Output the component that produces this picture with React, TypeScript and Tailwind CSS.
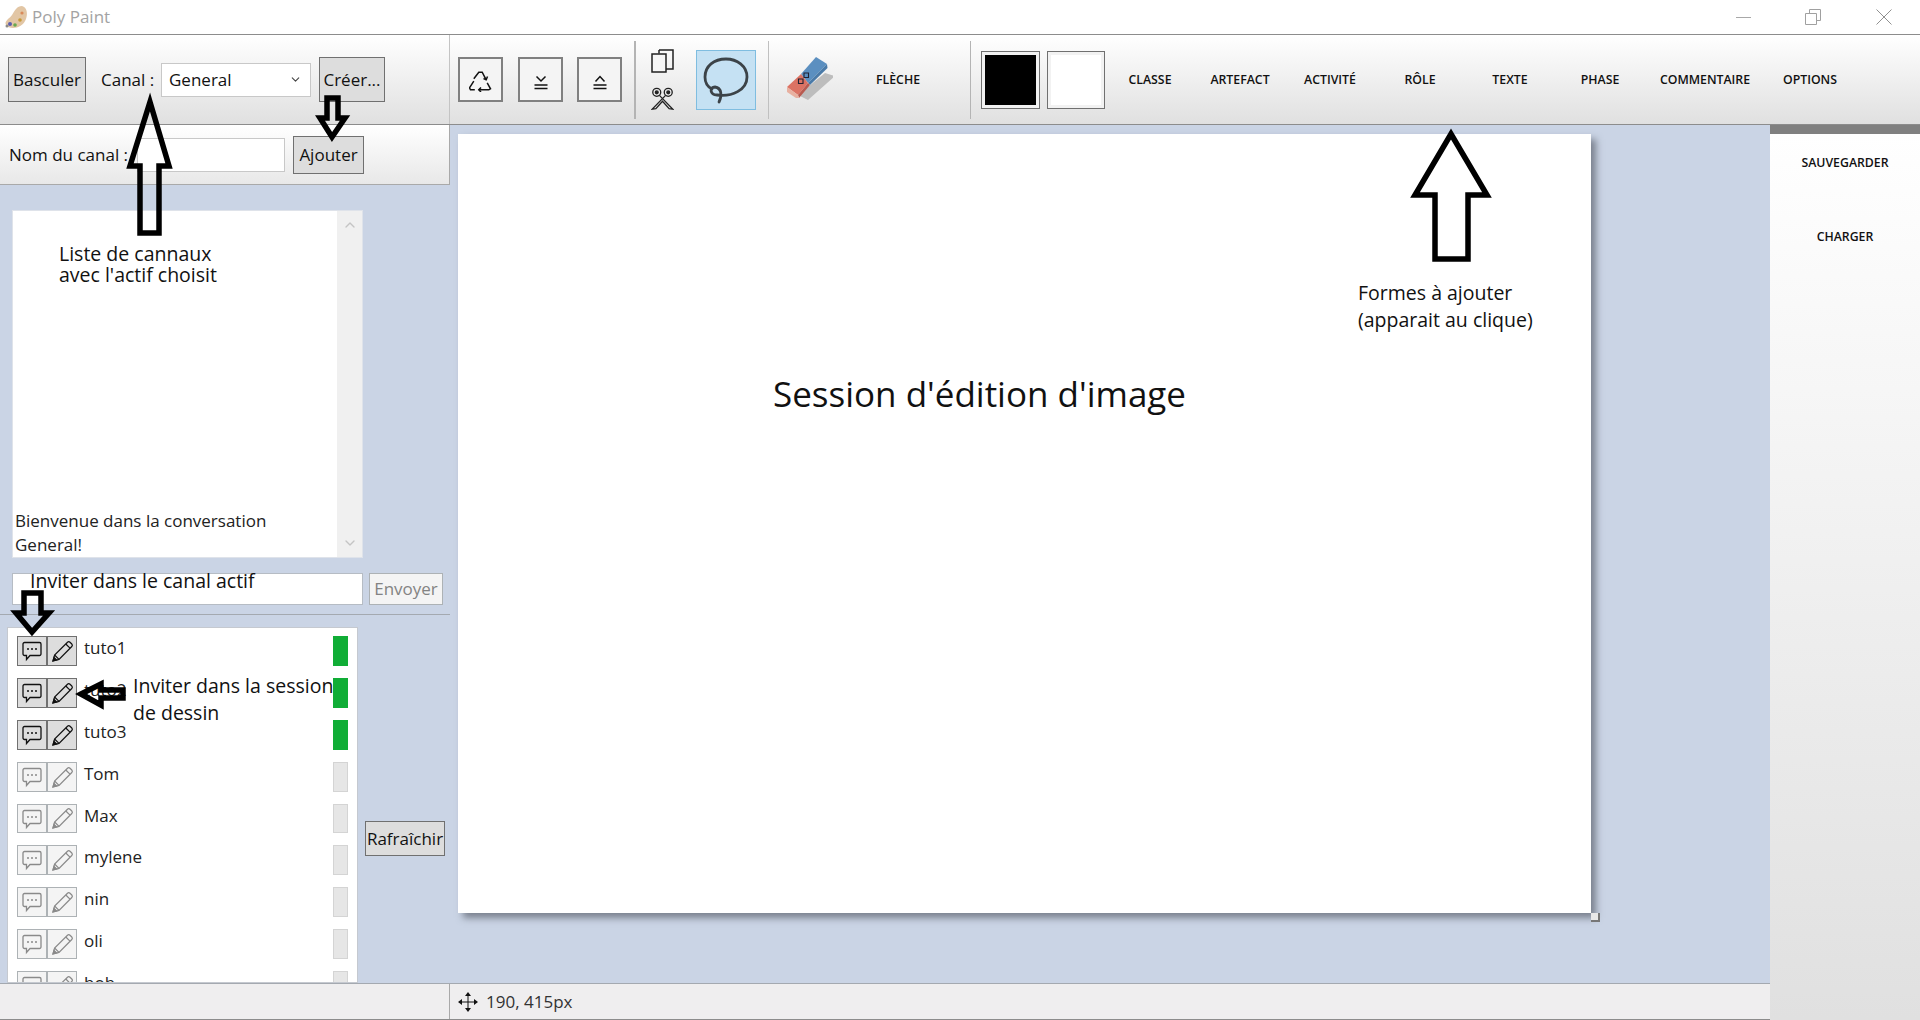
import { ChevronDown, ChevronUp } from "lucide-react";

const users = [
    { name: "tuto1", online: true },
    { name: "tuto2", online: true },
    { name: "tuto3", online: true },
    { name: "Tom", online: false },
    { name: "Max", online: false },
    { name: "mylene", online: false },
    { name: "nin", online: false },
    { name: "oli", online: false },
    { name: "bob", online: false },
];

const shapes = [
    { label: "CLASSE", wide: false },
    { label: "ARTEFACT", wide: false },
    { label: "ACTIVITÉ", wide: false },
    { label: "RÔLE", wide: false },
    { label: "TEXTE", wide: false },
    { label: "PHASE", wide: false },
    { label: "COMMENTAIRE", wide: true },
    { label: "OPTIONS", wide: false },
];

const ChatIcon = () => (
    <svg width="22" height="22" viewBox="0 0 22 22" fill="none" stroke="currentColor" strokeWidth="1.3">
        <path d="M3.5 2.500h15a1.500 1.500 0 0 1 1.500 1.500v10a1.500 1.500 0 0 1-1.500 1.500H9l-3.500 4v-4h-2A1.500 1.500 0 0 1 2 14V4a1.500 1.500 0 0 1 1.500-1.500z" />
        <circle cx="7" cy="9" r="1" fill="currentColor" stroke="none" />
        <circle cx="11" cy="9" r="1" fill="currentColor" stroke="none" />
        <circle cx="15" cy="9" r="1" fill="currentColor" stroke="none" />
    </svg>
);

const PencilIcon = () => (
    <svg width="23" height="23" viewBox="0 0 23 23" fill="none" stroke="currentColor" strokeWidth="1.2">
        <path d="M2 21l1.600-6L16.500 2.200a1.800 1.800 0 0 1 2.500 0l1.800 1.800a1.800 1.800 0 0 1 0 2.500L8 19.400z" />
        <path d="M14.800 4l4.200 4.200M3.600 15L8 19.400" />
        <path d="M2 21l1-3.600 2.600 2.600z" fill="currentColor" />
    </svg>
);

const RecycleIcon = () => (
    <svg width="24" height="24" viewBox="0 0 24 24" fill="none" stroke="#111" strokeWidth="1.500">
        <path d="M4.800 10.800L9.800 4.200h3.400l4 7.600" />
        <path d="M14.500 10.500l2.700 1.300 1.300-3.300" />
        <path d="M18.200 14.800l3.300 6-1.700 1H9.800" />
        <path d="M12 19.500L9.800 21.800 12 24" />
        <path d="M5.800 21.800H1.500l-1-2 4.300-6.600" />
    </svg>
);

const EqualVee = ({ up }: { up: boolean }) => (
    <svg width="20" height="20" viewBox="0 0 20 20" fill="none" stroke="#111" strokeWidth="1.500">
        <path d={up ? "M5.500 11.500L10 6.500l4.500 5" : "M5.500 6.500L10 11l4.500-4.500"} />
        <path d="M3.500 15h13M3.500 18.500h13" />
    </svg>
);

const CopyIcon = () => (
    <svg width="23" height="24" viewBox="0 0 23 24" fill="#f6f6f6" stroke="#222" strokeWidth="1.500">
        <path d="M8 1h14v19h-7" fill="none" />
        <path d="M8 4.500V1" fill="none" />
        <path d="M1 5h14v18H1z" />
    </svg>
);

const ScissorsIcon = () => (
    <svg width="23" height="23" viewBox="0 0 25 26" fill="none" stroke="#222" strokeWidth="1.500">
        <circle cx="6" cy="6" r="4.500" />
        <circle cx="19" cy="6" r="4.500" />
        <circle cx="6" cy="6" r="1.600" fill="#222" />
        <circle cx="19" cy="6" r="1.600" fill="#222" />
        <path d="M9 9.500L24 25l-4-.5-8-9M16 9.500L1 25l4-.5 8-9" />
    </svg>
);

const LassoIcon = () => (
    <svg className="blur-[0.4px]" width="56" height="56" viewBox="0 0 56 56" fill="none" stroke="#3c4348" strokeWidth="2.800" strokeLinecap="round">
        <path d="M21 50C24 44 24 36 17 35C11 35 12 43 19 43C34 45 49 38 49 25C49 14 39 7 28 7C16 7 7 14 7 25C7 31 10 35 14 37" />
    </svg>
);

const EraserIcon = () => (
    <svg width="47" height="47" viewBox="6 6 47 47">
        <path d="M45 23L55 26L28 50L18 45z" fill="#bdbdbd" />
        <path d="M36 7L47 14L28 33L21 24z" fill="#5b8fc0" />
        <path d="M21 24L28 33L18 45L7 37z" fill="#dc7263" />
        <path d="M47 14L47.500 18L30 35L28 33z" fill="#4a7aa8" />
        <path d="M28 33L30 35L19 48L18 45z" fill="#b95a50" />
        <path d="M7 37L18 45L19 48L16 48L7 42z" fill="#e8b0a0" />
        <path d="M24 23h4.500v4.500H24zM18.500 29H23v4.500h-4.500z" fill="none" stroke="#223" strokeWidth="1.100" />
    </svg>
);

const PaletteIcon = () => (
    <svg width="24" height="26" viewBox="0 0 24 26">
        <path d="M2 21c-2-4 3-6 6-10 3-5 5-9 10-9 5 1 6 8 4 13-2 6-8 9-13 9-3 0-6-1-7-3z" fill="#e2c6a5" />
        <circle cx="6" cy="20" r="2" fill="#5a5fb0" />
        <circle cx="11" cy="21" r="1.800" fill="#6aa84f" />
        <circle cx="16" cy="16" r="1.800" fill="#c79a3a" />
        <circle cx="18" cy="9" r="1.600" fill="#d98a5a" />
        <circle cx="3" cy="22" r="1.500" fill="#8a8a8a" />
    </svg>
);

const MoveIcon = () => (
    <svg width="20" height="20" viewBox="0 0 20 20" fill="#111" stroke="none">
        <path d="M10 0l3 4H7zM10 20l-3-4h6zM0 10l4-3v6zM20 10l-4 3V7z" />
        <path d="M9.500 3h1v14h-1zM3 9.500h14v1H3z" />
    </svg>
);

const GrayButton = ({ children, className }: { children: React.ReactNode; className: string }) => (
    <div className={`flex items-center justify-center bg-[#dddddd] border border-[#707070] ${className}`}>
        {children}
    </div>
);

// annotation arrows drawn on top of the screen capture
const Arrows = () => (
    <svg className="absolute left-0 top-0 pointer-events-none" width="1920" height="1020" fill="none" stroke="#000" strokeWidth="5.500" strokeLinejoin="miter">
        <path d="M150 102L169 166H159V233H140V166H130z" />
        <path d="M327 98H338V118H345L332 137L320 118H327z" />
        <path d="M1451 134L1487 195H1468V259H1435V195H1415z" />
        <path d="M24 593H41V613H49L32 632L16 613H24z" />
        <path d="M81 694L101 684V690H123V698H101V705z" />
    </svg>
);

const App = () => {
    return (
        <div className="relative flex flex-col w-[1920px] h-[1020px] overflow-hidden bg-white text-[17px] text-[#111] font-['Open_Sans',sans-serif]">
            {/* title bar */}
            <div className="flex items-center h-[35px] shrink-0 bg-white border-b border-[#8c8c8c]">
                <div className="ml-[4px] w-[24px] flex"><PaletteIcon /></div>
                <div className="ml-[4px] text-[#a3a3a3] text-[17px]">Poly Paint</div>
                <div className="ml-auto flex items-center text-[#9a9a9a]">
                    <div className="w-[15px] h-px bg-[#a8a8a8]" />
                    <svg className="ml-[54px]" width="16" height="16" viewBox="0 0 16 16" fill="none" stroke="#a0a0a0">
                        <path d="M.5 4.500h11v11H.5zM4.500 4V.5h11v11H12" />
                    </svg>
                    <svg className="ml-[55px] mr-[28px]" width="16" height="16" viewBox="0 0 16 16" fill="none" stroke="#909090">
                        <path d="M.5.5l15 15M15.500.5l-15 15" />
                    </svg>
                </div>
            </div>

            {/* toolbar */}
            <div className="flex items-center h-[90px] shrink-0 border-b border-[#8c8c8c] bg-gradient-to-b from-white to-[#e0e0e0]">
                <div className="flex items-center w-[450px] h-full border-r border-[#c4c4c4] pl-2">
                    <GrayButton className="w-[78px] h-[45px]">Basculer</GrayButton>
                    <div className="ml-[15px] w-[60px] whitespace-nowrap">Canal :</div>
                    <div className="flex items-center justify-between w-[150px] h-[34px] bg-white border border-[#c8c8c8] pl-[7px] pr-[8px]">
                        General
                        <ChevronDown size={13} color="#444" />
                    </div>
                    <GrayButton className="ml-2 w-[66px] h-[45px]">Créer...</GrayButton>
                </div>
                <div className="ml-2 w-[45px] h-[45px] flex items-center justify-center bg-[#f4f4f4] border-2 border-[#808080]"><RecycleIcon /></div>
                <div className="ml-[15px] w-[45px] h-[45px] flex items-center justify-center bg-[#f4f4f4] border-2 border-[#808080]"><EqualVee up={false} /></div>
                <div className="ml-[14px] w-[45px] h-[45px] flex items-center justify-center bg-[#f4f4f4] border-2 border-[#808080]"><EqualVee up={true} /></div>
                <div className="ml-3 w-[2px] h-[78px] bg-[#b4b4b4]" />
                <div className="ml-[15px] flex flex-col gap-[14px] w-[25px]">
                    <CopyIcon />
                    <ScissorsIcon />
                </div>
                <div className="ml-5 w-[60px] h-[60px] flex items-center justify-center bg-[#c5e1f3] border border-[#7fbde0]"><LassoIcon /></div>
                <div className="ml-3 w-px h-[78px] bg-[#c0c0c0]" />
                <div className="ml-[17px] w-[47px] flex"><EraserIcon /></div>
                <div className="ml-5 w-[90px] pt-px text-center text-[12.3px] font-semibold">FLÈCHE</div>
                <div className="ml-[27px] w-px h-[78px] bg-[#b4b4b4]" />
                <div className="ml-[10px] w-[59px] h-[58px] p-[3px] bg-[#f2f2f2] border border-[#707070]">
                    <div className="w-full h-full bg-black" />
                </div>
                <div className="ml-[7px] w-[58px] h-[58px] p-[3px] bg-[#f2f2f2] border border-[#707070]">
                    <div className="w-full h-full bg-white" />
                </div>
                {shapes.map((s) => (
                    <div key={s.label} className={`pt-px text-center text-[12.3px] font-semibold whitespace-nowrap ${s.wide ? "w-[120px]" : "w-[90px]"}`}>
                        {s.label}
                    </div>
                ))}
            </div>

            {/* body */}
            <div className="flex flex-1 min-h-0 bg-[#cad4e5]">
                <div className="flex flex-col flex-1 min-w-0">
                    <div className="flex flex-1 min-h-0">
                        {/* left panel */}
                        <div className="flex flex-col w-[450px] shrink-0 overflow-hidden">
                            <div className="flex items-center h-[60px] shrink-0 pl-[9px] border-r border-b border-[#a9a9a9] bg-gradient-to-b from-white to-[#e8e8e8]">
                                <div className="w-[128px] whitespace-nowrap">Nom du canal :</div>
                                <div className="w-[148px] h-[34px] bg-white border border-[#c8c8c8]" />
                                <GrayButton className="ml-2 w-[71px] h-[38px]">Ajouter</GrayButton>
                            </div>

                            <div className="flex ml-3 mt-[25px] w-[351px] h-[348px] shrink-0 bg-white border border-[#dfe3ea]">
                                <div className="flex-1 flex flex-col justify-end pl-[2px] leading-[24px] text-[#222]">
                                    <div>Bienvenue dans la conversation</div>
                                    <div>General!</div>
                                </div>
                                <div className="flex flex-col justify-between items-center w-[25px] py-[6px] bg-[#f0f0f0] text-[#c4c4c4]">
                                    <ChevronUp size={16} />
                                    <ChevronDown size={16} />
                                </div>
                            </div>

                            <div className="flex ml-3 mt-[15px] h-[32px] shrink-0">
                                <div className="w-[351px] bg-white border border-[#b6bcc4]" />
                                <div className="flex items-center justify-center ml-[6px] w-[74px] bg-[#f4f4f4] border border-[#adb2b5] text-[#838383]">Envoyer</div>
                            </div>
                            <div className="mt-[9px] h-px shrink-0 bg-[#a4a9b0]" />

                            <div className="flex flex-1 min-h-0 mt-3">
                                <div className="ml-[7px] w-[351px] flex flex-col gap-3 pt-2 pl-[9px] pr-[9px] bg-white border border-[#c5c9d0] overflow-hidden">
                                    {users.map((u) => (
                                        <div key={u.name} className={`flex items-center shrink-0 ${u.name === "Max" ? "h-[29px]" : "h-[30px]"}`}>
                                            <div className={`flex items-center justify-center w-[30px] h-full border ${u.online ? "bg-[#dddddd] border-[#707070] text-[#111]" : "bg-[#f4f4f4] border-[#adb2b5] text-[#8a8a8a]"}`}>
                                                <ChatIcon />
                                            </div>
                                            <div className={`flex items-center justify-center w-[30px] h-full border ${u.online ? "bg-[#dddddd] border-[#707070] text-[#111]" : "bg-[#f4f4f4] border-[#adb2b5] text-[#8a8a8a]"}`}>
                                                <PencilIcon />
                                            </div>
                                            <div className="ml-[7px] flex-1 -mt-[6px] text-[#222]">{u.name}</div>
                                            <div className={`w-[15px] h-full border ${u.online ? "bg-[#10ad36] border-[#10ad36]" : "bg-[#e6e6e6] border-[#d4d4d4]"}`} />
                                        </div>
                                    ))}
                                </div>
                                <GrayButton className="ml-[7px] mt-[194px] w-[80px] h-[35px]">Rafraîchir</GrayButton>
                            </div>
                        </div>

                        {/* canvas */}
                        <div className="flex-1 pl-2 pt-[9px]">
                            <div className="relative w-[1133px] h-[779px] bg-white shadow-[5px_5px_7px_rgba(70,75,85,0.6)]">
                                <div className="pt-[237px] pl-[315px] text-[35px] leading-[46px] text-[#111]">Session d'édition d'image</div>
                                <div className="absolute left-[1133px] top-[779px] w-[9px] h-[9px] bg-[#e8e8e8] border-r-2 border-b-2 border-[#777]" />
                            </div>
                        </div>
                    </div>

                    {/* status bar */}
                    <div className="flex items-center h-[37px] shrink-0 bg-[#efeeef] border-t border-[#a4a9b0] border-b border-b-[#8c8c8c]">
                        <div className="w-[450px] h-full border-r border-[#a9a9a9]" />
                        <div className="ml-2 flex"><MoveIcon /></div>
                        <div className="ml-2 text-[#333]">190, 415px</div>
                    </div>
                </div>

                {/* right panel */}
                <div className="flex flex-col items-center w-[150px] shrink-0">
                    <div className="w-full h-[9px] bg-[#808080]" />
                    <div className="flex flex-col items-center flex-1 w-full bg-gradient-to-b from-white to-[#e0e0e0] text-[12.3px] font-semibold">
                        <div className="mt-5">SAUVEGARDER</div>
                        <div className="mt-[56px]">CHARGER</div>
                    </div>
                </div>
            </div>

            {/* annotations over the capture */}
            <Arrows />
            <div className="absolute left-[59px] top-[243px] text-[19.5px] leading-[21px] text-[#111]">Liste de cannaux<br />avec l'actif choisit</div>
            <div className="absolute left-[30px] top-[569px] text-[19.5px] leading-[24px] text-[#111]">Inviter dans le canal actif</div>
            <div className="absolute left-[133px] top-[672px] text-[19.5px] leading-[27px] text-[#111]">Inviter dans la session<br />de dessin</div>
            <div className="absolute left-[1358px] top-[279px] text-[19.5px] leading-[27px] text-[#111]">Formes à ajouter<br />(apparait au clique)</div>
        </div>
    );
};

export default App;
